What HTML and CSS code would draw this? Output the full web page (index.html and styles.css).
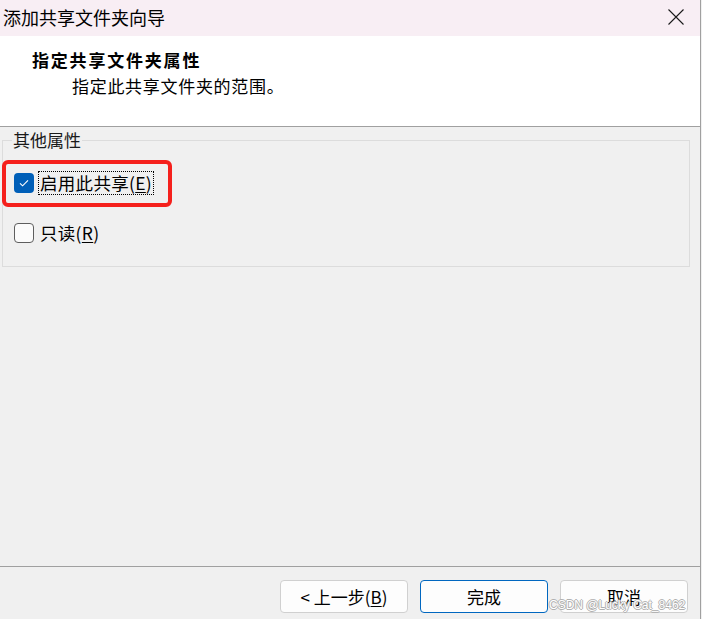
FILE: index.html
```html
<!DOCTYPE html>
<html lang="zh-CN">
<head>
<meta charset="utf-8">
<title>添加共享文件夹向导</title>
<link rel="stylesheet" href="styles.css">
</head>
<body>
<div class="window">
  <div class="titlebar">
    <span class="title">添加共享文件夹向导</span>
    <svg class="close" width="16" height="16" viewBox="0 0 16 16"><path d="M0.5 0.5 L15.5 15.5 M15.5 0.5 L0.5 15.5" stroke="#1a1a1a" stroke-width="1.1" fill="none"/></svg>
  </div>
  <div class="header">
    <div class="h-title">指定共享文件夹属性</div>
    <div class="h-sub">指定此共享文件夹的范围。</div>
  </div>
  <div class="main">
    <fieldset class="group">
      <legend class="legend">其他属性</legend>
      <div class="rows">
        <label class="row">
          <span class="box checked"><svg width="20" height="20" viewBox="0 0 20 20"><path d="M6 10.3 L8.6 12.8 L14 7.3" stroke="#fff" stroke-width="1.1" fill="none"/></svg></span>
          <span class="text focus">启用此共享(<u>E</u>)</span>
        </label>
        <label class="row">
          <span class="box"></span>
          <span class="text">只读(<u>R</u>)</span>
        </label>
      </div>
    </fieldset>
    <div class="annot"></div>
  </div>
  <div class="footer">
    <button class="btn">&lt; 上一步(<u>B</u>)</button>
    <button class="btn default">完成</button>
    <button class="btn">取消</button>
    <span class="watermark">CSDN @Lucky Cat_8462</span>
  </div>
</div>
</body>
</html>
```
FILE: styles.css
```css
html, body {
  margin: 0;
  padding: 0;
  background: #f0f0f0;
}
body {
  width: 702px;
  height: 619px;
  overflow: hidden;
  font-family: "Noto Sans CJK SC", "Microsoft YaHei", sans-serif;
  color: #000;
}
.window {
  width: 700px;
  height: 619px;
  border-right: 1px solid #a0a0a0;
  display: flex;
  flex-direction: column;
  position: relative;
}
.titlebar {
  height: 36px;
  background: #f8eef4;
  display: flex;
  align-items: center;
  justify-content: space-between;
  padding: 0 16px 0 3px;
  box-sizing: border-box;
}
.title {
  font-size: 18px;
  line-height: 36px;
  position: relative;
  top: -1px;
}
.close {
  display: block;
  margin-top: -2px;
}
.header {
  height: 90px;
  background: #fff;
  border-bottom: 1px solid #a0a0a0;
  box-sizing: content-box;
  padding: 0;
}
.h-title {
  font-size: 17px;
  font-weight: bold;
  letter-spacing: 1.8px;
  line-height: 20px;
  padding: 14px 0 0 32px;
}
.h-sub {
  font-size: 17px;
  letter-spacing: 0.7px;
  line-height: 20px;
  padding: 6px 0 0 72px;
}
.main {
  flex: 1;
  position: relative;
  border-bottom: 1px solid #a0a0a0;
}
.group {
  margin: 3px 0 0 2px;
  width: 688px;
  box-sizing: border-box;
  border: 1px solid #dcdcdc;
  padding: 0 11px 21px 11px;
}
.legend {
  font-size: 17px;
  line-height: 20px;
  padding: 0 1px;
  margin-left: -2px;
  color: #1a1a1a;
}
.rows {
  display: flex;
  flex-direction: column;
  gap: 26px;
  padding-top: 21px;
}
.row {
  display: flex;
  align-items: center;
  height: 24px;
  gap: 5px;
}
.box {
  width: 18px;
  height: 18px;
  border: 1px solid #5e5e5e;
  border-radius: 4px;
  background: #fbfbfb;
  display: flex;
}
.box.checked {
  width: 20px;
  height: 20px;
  border: none;
  background: #005fb8;
}
.text {
  font-size: 17.5px;
  letter-spacing: 0.3px;
  line-height: 22px;
  padding: 0 1px;
}
.text u {
  text-underline-offset: 2px;
}
.focus {
  outline: 1px dotted #000;
  outline-offset: 0;
}
.annot {
  position: absolute;
  left: 2px;
  top: 33px;
  width: 162px;
  height: 39px;
  border: 4px solid #f5201c;
  border-radius: 6px;
}
.footer {
  height: 52px;
  display: flex;
  justify-content: flex-end;
  align-items: flex-start;
  gap: 12px;
  padding: 13px 12px 0 0;
  box-sizing: border-box;
  position: relative;
}
.btn {
  width: 128px;
  height: 33px;
  background: #fdfdfd;
  border: 1px solid #d0d0d0;
  border-radius: 4px;
  font-family: "Noto Sans CJK SC", "Microsoft YaHei", sans-serif;
  font-size: 17px;
  color: #000;
  padding: 0;
  line-height: 30px;
}
.btn u {
  text-underline-offset: 2px;
}
.btn.default {
  border-color: #0067c0;
}
.watermark {
  position: absolute;
  left: 549px;
  top: 31px;
  font-family: "Liberation Sans", Arial, sans-serif;
  font-size: 12px;
  line-height: 14px;
  color: #ffffff;
  text-shadow: 1px 0 0 #b0b0b0, -1px 0 0 #b0b0b0, 0 1px 0 #b0b0b0, 0 -1px 0 #b0b0b0;
}
```
